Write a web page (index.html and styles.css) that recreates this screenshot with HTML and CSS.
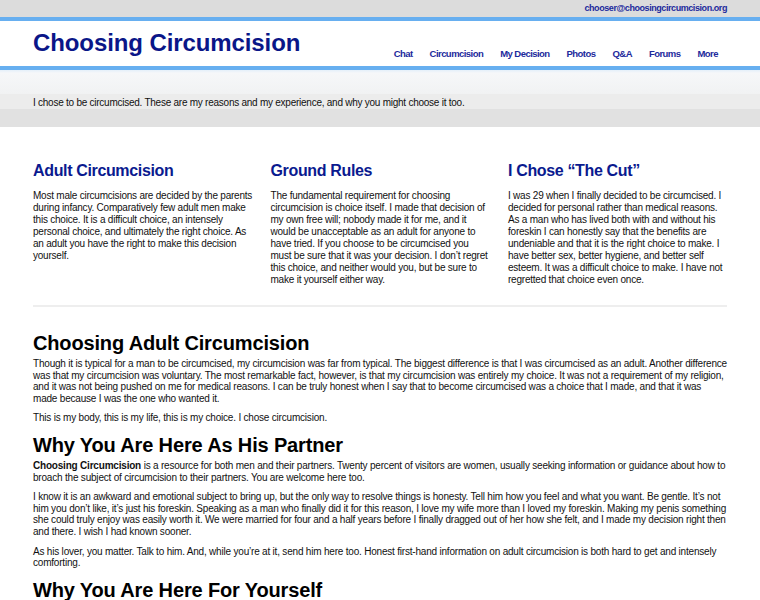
FILE: index.html
```html
<!DOCTYPE html>
<html>
<head>
<meta charset="utf-8">
<link rel="stylesheet" href="styles.css">
</head>
<body>
<div class="topbar"><div class="wrap topbar-in"><span class="email">chooser@choosingcircumcision.org</span></div></div>
<div class="header">
  <div class="wrap header-in">
    <div class="logo">Choosing Circumcision</div>
    <nav class="nav">
      <a>Chat</a><a>Circumcision</a><a>My Decision</a><a>Photos</a><a>Q&amp;A</a><a>Forums</a><a>More</a>
    </nav>
  </div>
</div>
<div class="band1"></div>
<div class="tagline"><div class="wrap">I chose to be circumcised. These are my reasons and my experience, and why you might choose it too.</div></div>
<div class="band2"></div>
<div class="wrap">
  <div class="cols">
    <div class="col">
      <h3>Adult Circumcision</h3>
      <p>Most male circumcisions are decided by the parents during infancy. Comparatively few adult men make this choice. It is a difficult choice, an intensely personal choice, and ultimately the right choice. As an adult you have the right to make this decision yourself.</p>
    </div>
    <div class="col">
      <h3>Ground Rules</h3>
      <p>The fundamental requirement for choosing circumcision is choice itself. I made that decision of my own free will; nobody made it for me, and it would be unacceptable as an adult for anyone to have tried. If you choose to be circumcised you must be sure that it was your decision. I don’t regret this choice, and neither would you, but be sure to make it yourself either way.</p>
    </div>
    <div class="col">
      <h3>I Chose “The Cut”</h3>
      <p>I was 29 when I finally decided to be circumcised. I decided for personal rather than medical reasons. As a man who has lived both with and without his foreskin I can honestly say that the benefits are undeniable and that it is the right choice to make. I have better sex, better hygiene, and better self esteem. It was a difficult choice to make. I have not regretted that choice even once.</p>
    </div>
  </div>
  <div class="rule"></div>
  <div class="main">
    <h2>Choosing Adult Circumcision</h2>
    <p>Though it is typical for a man to be circumcised, my circumcision was far from typical. The biggest difference is that I was circumcised as an adult. Another difference was that my circumcision was voluntary. The most remarkable fact, however, is that my circumcision was entirely my choice. It was not a requirement of my religion, and it was not being pushed on me for medical reasons. I can be truly honest when I say that to become circumcised was a choice that I made, and that it was made because I was the one who wanted it.</p>
    <p>This is my body, this is my life, this is my choice. I chose circumcision.</p>
    <h2>Why You Are Here As His Partner</h2>
    <p><b>Choosing Circumcision</b> is a resource for both men and their partners. Twenty percent of visitors are women, usually seeking information or guidance about how to broach the subject of circumcision to their partners. You are welcome here too.</p>
    <p>I know it is an awkward and emotional subject to bring up, but the only way to resolve things is honesty. Tell him how you feel and what you want. Be gentle. It’s not him you don’t like, it’s just his foreskin. Speaking as a man who finally did it for this reason, I love my wife more than I loved my foreskin. Making my penis something she could truly enjoy was easily worth it. We were married for four and a half years before I finally dragged out of her how she felt, and I made my decision right then and there. I wish I had known sooner.</p>
    <p>As his lover, you matter. Talk to him. And, while you’re at it, send him here too. Honest first-hand information on adult circumcision is both hard to get and intensely comforting.</p>
    <h2>Why You Are Here For Yourself</h2>
  </div>
</div>
</body>
</html>
```
FILE: styles.css
```css
html, body { margin: 0; padding: 0; background: #fff; }
body { font-family: "Liberation Sans", Arial, Helvetica, sans-serif; color: #111; overflow: hidden; }
.wrap { width: 694px; margin-left: 33px; }
.topbar { height: 17px; background: #dcdcdc; }
.topbar-in { display: flex; justify-content: flex-end; height: 15px; align-items: center; }
.email { font-size: 9px; font-weight: bold; color: #1d2a9c; letter-spacing: -0.43px; }
.header {
  background: #fff;
  border-top: 4px solid #67aff0;
  border-bottom: 4px solid #67aff0;
  height: 45px;
}
.header-in { display: flex; justify-content: space-between; height: 45px; }
.logo { font-size: 24px; font-weight: bold; color: #0a1688; margin-top: 9px; letter-spacing: -0.1px; line-height: 26px; }
.nav { display: flex; gap: 17px; margin-top: 26px; margin-right: 9px; }
.nav a { font-size: 9.5px; font-weight: bold; color: #1d2a9c; letter-spacing: -0.55px; line-height: 14px; }
.band1 { height: 24px; background: linear-gradient(#e4effa 0, #f6f7f9 3px, #f1f2f3 100%); }
.tagline { height: 15px; background: #ececec; font-size: 10px; line-height: 15px; color: #111; letter-spacing: -0.25px; padding-top: 1px; box-sizing: border-box; }
.band2 { height: 18px; background: #e1e1e1; }
.cols { display: grid; grid-template-columns: 221px 221px 221px; column-gap: 16.5px; margin-top: 34px; height: 144px; }
.col h3 { margin: 0 0 9px; font-size: 16px; line-height: 20px; color: #0a1a8f; letter-spacing: -0.35px; }
.col p { margin: 0; font-size: 10px; line-height: 12px; letter-spacing: -0.22px; color: #111; }
.rule { height: 2px; background: #eeeeee; }
.main { padding-top: 23px; }
.main h2 { margin: 0; font-size: 20px; line-height: 26px; color: #000; letter-spacing: -0.15px; }
.main p { margin: 2px 0 8px; font-size: 10px; line-height: 11.6px; letter-spacing: -0.2px; color: #111; }
.main p + p { margin-top: 0; }
.main p + h2 { margin-top: 2px; }
```
